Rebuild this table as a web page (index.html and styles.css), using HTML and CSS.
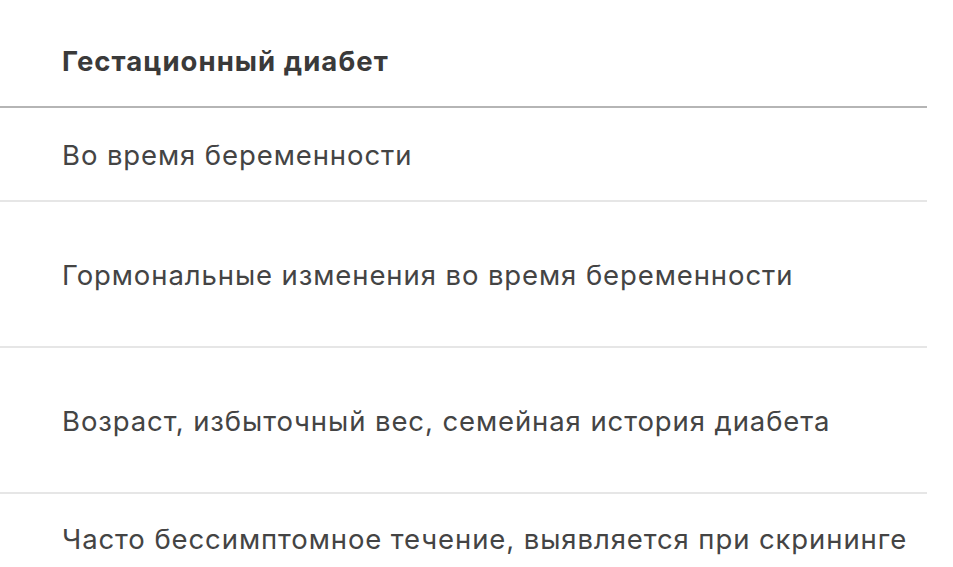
FILE: index.html
```html
<!DOCTYPE html>
<html lang="ru">
<head>
<meta charset="utf-8">
<link rel="stylesheet" href="styles.css">
</head>
<body>
<div class="table">
  <div class="row head"><div class="cell">Гестационный диабет</div></div>
  <div class="row r1"><div class="cell">Во время беременности</div></div>
  <div class="row r2"><div class="cell">Гормональные изменения во время беременности</div></div>
  <div class="row r2"><div class="cell">Возраст, избыточный вес, семейная история диабета</div></div>
  <div class="row r4"><div class="cell">Часто бессимптомное течение, выявляется при скрининге</div></div>
</div>
</body>
</html>
```
FILE: styles.css
```css
html, body {
  margin: 0;
  padding: 0;
  background: #fff;
}
body {
  font-family: Inter, Roboto, "Liberation Sans", sans-serif;
  color: #444;
  font-size: 27.5px;
  letter-spacing: 0.9px;
  overflow: hidden;
}
.table {
  width: 927px;
  display: flex;
  flex-direction: column;
}
.row {
  display: flex;
  align-items: center;
  padding-left: 62px;
  border-bottom: 2px solid #e6e6e6;
  box-sizing: border-box;
}
.head {
  height: 108px;
  padding-top: 15px;
  border-bottom-color: #b5b5b5;
  font-weight: 700;
  letter-spacing: 1.05px;
  color: #3a3a3a;
}
.cell {
  line-height: 32px;
  white-space: nowrap;
}
.r1 {
  height: 94px;
  padding-top: 2px;
}
.r2 {
  height: 146px;
  padding-top: 2px;
}
.r4 {
  height: 90px;
  border-bottom: none;
}
```
